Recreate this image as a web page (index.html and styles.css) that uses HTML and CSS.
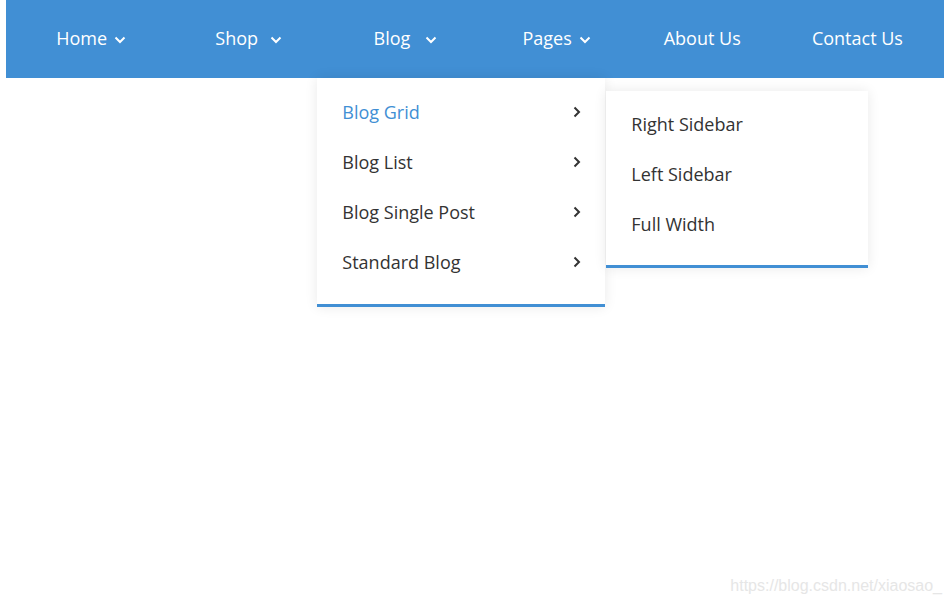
FILE: index.html
```html
<!DOCTYPE html>
<html lang="en">
<head>
    <meta charset="UTF-8">
    <title>Menu</title>
    <link rel="stylesheet" href="styles.css">
</head>
<body>

    <!-- main navigation -->
    <ul class="nav">
        <li class="nav-item">
            <a href="#">Home<svg class="caret" viewBox="0 0 12 8"><path d="M1.5 1.5 6 6l4.5-4.5"/></svg></a>
        </li>
        <li class="nav-item">
            <a href="#">Shop<svg class="caret wide" viewBox="0 0 12 8"><path d="M1.5 1.5 6 6l4.5-4.5"/></svg></a>
        </li>
        <li class="nav-item open">
            <a href="#">Blog<svg class="caret wider" viewBox="0 0 12 8"><path d="M1.5 1.5 6 6l4.5-4.5"/></svg></a>

            <ul class="dropdown">
                <li class="drop-item active">
                    <a href="#">Blog Grid<svg class="arrow" viewBox="0 0 8 12"><path d="M1.5 1.5 6 6l-4.5 4.5"/></svg></a>
                    <ul class="dropdown sub">
                        <li class="drop-item"><a href="#">Right Sidebar</a></li>
                        <li class="drop-item"><a href="#">Left Sidebar</a></li>
                        <li class="drop-item"><a href="#">Full Width</a></li>
                    </ul>
                </li>
                <li class="drop-item"><a href="#">Blog List<svg class="arrow" viewBox="0 0 8 12"><path d="M1.5 1.5 6 6l-4.5 4.5"/></svg></a></li>
                <li class="drop-item"><a href="#">Blog Single Post<svg class="arrow" viewBox="0 0 8 12"><path d="M1.5 1.5 6 6l-4.5 4.5"/></svg></a></li>
                <li class="drop-item"><a href="#">Standard Blog<svg class="arrow" viewBox="0 0 8 12"><path d="M1.5 1.5 6 6l-4.5 4.5"/></svg></a></li>
            </ul>
        </li>
        <li class="nav-item">
            <a href="#">Pages<svg class="caret" viewBox="0 0 12 8"><path d="M1.5 1.5 6 6l4.5-4.5"/></svg></a>
        </li>
        <li class="nav-item"><a href="#">About Us</a></li>
        <li class="nav-item"><a href="#">Contact Us</a></li>
    </ul>

    <div class="watermark">https://blog.csdn.net/xiaosao_</div>

</body>
</html>
```

FILE: styles.css
```css
body {
    font-family: 'Open Sans', 'Segoe UI', sans-serif;
    margin: 0;
    padding: 0;
    background-color: #fff;
    color: #333;
    height: 602px;
    position: relative;
    overflow: hidden;
}

ul {
    list-style: none;
    margin: 0;
    padding: 0;
}

a {
    text-decoration: none;
    color: inherit;
}

/* 상단 메뉴 */
.nav {
    display: grid;
    grid-template-columns: repeat(6, 1fr);
    margin: 0 8px 0 6px;
    padding: 0 7px 0 0;
    height: 78px;
    background-color: #418fd4;
}

.nav-item {
    position: relative;
    text-align: center;
    line-height: 76px;
    font-size: 18px;
    color: #fff;
    margin-left: -4px;
}

.caret {
    width: 12px;
    height: 8px;
    margin-left: 7px;
    margin-right: -19px;
    vertical-align: 1px;
    fill: none;
    stroke: #fff;
    stroke-width: 2;
}

.caret.wide {
    margin-left: 12px;
    margin-right: -24px;
}

.caret.wider {
    margin-left: 15px;
    margin-right: -27px;
}

/* 드롭다운 */
.dropdown {
    display: none;
    position: absolute;
    top: 78px;
    left: 5px;
    width: 288px;
    padding: 9px 0 17px;
    background-color: #fff;
    border-bottom: 3px solid #418fd4;
    box-shadow: 0 0 12px rgba(0, 0, 0, 0.09);
    text-align: left;
    z-index: 5;
}

.open > .dropdown {
    display: block;
}

.drop-item {
    position: relative;
    line-height: 50px;
    font-size: 18px;
    color: #333;
}

.drop-item > a {
    display: flex;
    align-items: center;
    justify-content: space-between;
    padding: 0 24px 0 25px;
}

.drop-item.active > a {
    color: #418fd4;
}

.arrow {
    width: 8px;
    height: 12px;
    fill: none;
    stroke: #333;
    stroke-width: 2;
}

.drop-item.active > .sub {
    display: block;
}

.sub {
    top: 4px;
    left: 289px;
    width: 262px;
    padding: 8px 0 16px;
}

.watermark {
    position: absolute;
    right: 10px;
    bottom: 7px;
    font-family: 'Liberation Sans', Arial, sans-serif;
    font-size: 16px;
    color: #e6e6e6;
}
```
